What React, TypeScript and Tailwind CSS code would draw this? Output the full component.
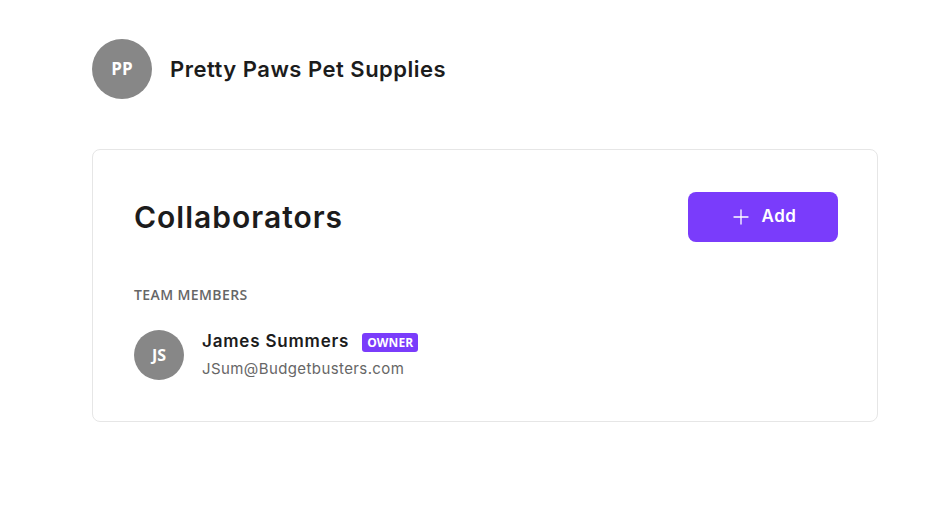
import { Plus } from 'lucide-react';

type Member = {
  initials: string;
  name: string;
  email: string;
  role?: string;
};

const members: Member[] = [
  {
    initials: 'JS',
    name: 'James Summers',
    email: 'JSum@Budgetbusters.com',
    role: 'OWNER',
  },
];

function Avatar({ initials, size }: { initials: string; size: 'lg' | 'md' }) {
  return (
    <div
      className={
        size === 'lg'
          ? 'flex size-[60px] shrink-0 items-center justify-center rounded-full bg-[#878787] text-[17px] font-bold text-white'
          : 'flex size-[50px] shrink-0 items-center justify-center rounded-full bg-[#878787] text-[16px] font-bold text-white'
      }
      style={{ fontFamily: '"Open Sans", sans-serif' }}
    >
      {initials}
    </div>
  );
}

export default function App() {
  return (
    <div
      className="min-h-screen bg-white px-[92px] pt-[39px] text-[#1c1c1c]"
      style={{ fontFamily: 'Inter, "Open Sans", sans-serif' }}
    >
      <div className="flex items-center gap-[18px]">
        <Avatar initials="PP" size="lg" />
        <h1 className="text-[22px] font-semibold tracking-[0.5px]">
          Pretty Paws Pet Supplies
        </h1>
      </div>

      <section className="mt-[50px] w-[786px] rounded-lg border border-[#e6e6e6] pt-[42px] pr-[39px] pb-[41px] pl-[41px]">
        <div className="flex items-center justify-between">
          <h2 className="text-[30px] font-semibold tracking-[1px]">
            Collaborators
          </h2>
          <button className="flex h-[50px] w-[150px] items-center justify-center gap-[8px] rounded-lg bg-[#7a3cfb] text-[17px] font-semibold tracking-[0.6px] text-white">
            <Plus size={24} strokeWidth={1.3} />
            Add
          </button>
        </div>

        <h3
          className="mt-[42px] text-[14px] font-semibold tracking-[0.4px] text-[#666666]"
          style={{ fontFamily: '"Open Sans", sans-serif' }}
        >
          TEAM MEMBERS
        </h3>

        <div className="mt-[24px] flex flex-col gap-4">
          {members.map((m) => (
            <div key={m.email} className="flex items-center gap-[18px]">
              <Avatar initials={m.initials} size="md" />
              <div className="flex flex-col">
                <div className="flex items-center gap-[13px]">
                  <span className="text-[17px] font-semibold tracking-[0.8px]">
                    {m.name}
                  </span>
                  <span
                    className="mt-[2px] rounded-[3px] bg-[#7a3cfb] px-[5px] py-[2px] text-[12px] leading-[15px] font-bold tracking-[0.1px] text-white"
                    style={{ fontFamily: '"Open Sans", sans-serif' }}
                  >
                    {m.role}
                  </span>
                </div>
                <span className="mt-[3px] text-[15px] tracking-[0.4px] text-[#666666]">
                  {m.email}
                </span>
              </div>
            </div>
          ))}
        </div>
      </section>
    </div>
  );
}
